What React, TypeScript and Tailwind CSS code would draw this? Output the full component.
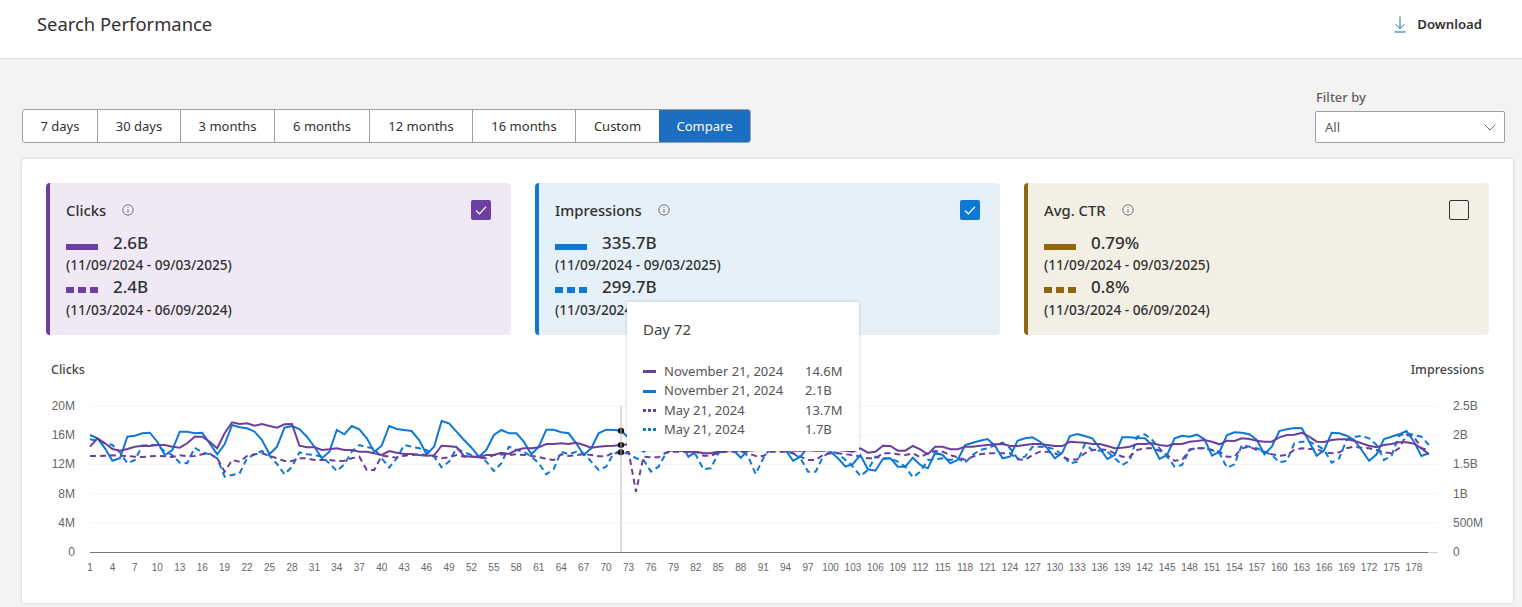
import React from "react";

const off = (a: number[]) => a.map((v) => v + 75);

const blueSolid = [
  120,130,160,197,190,125,122,115,113,140,
  180,165,110,110,115,113,145,178,148,90,
  97,100,110,135,178,155,98,93,102,125,
  155,190,170,105,118,93,103,130,170,152,
  93,102,105,108,135,178,155,78,85,110,
  135,158,185,165,120,105,115,115,140,178,
  155,104,104,112,115,145,180,160,115,104,
  105,107,128,
  ...off([
    75,95,80,50,45,50,70,
    110,95,60,45,45,60,90,113,90,50,
    40,45,50,90,122,110,80,50,60,95,
    115,140,132,105,148,152,117,115,140,140,
    113,135,145,98,105,130,120,75,68,62,
    57,78,115,110,62,55,52,65,85,115,
    98,48,42,48,55,85,117,105,52,52,
    54,55,75,117,105,55,47,50,44,58,
  ]),
  182,170,120,112,113,118,135,178,155,108,
  103,99,100,140,182,165,113,115,122,135,
  165,197,178,132,125,118,108,140,183,175,
];

const purpleSolid = [
  155,130,145,162,167,162,155,152,153,150,
  150,155,158,145,125,125,140,160,115,82,
  87,85,92,87,93,98,88,87,152,157,
  157,165,163,160,165,165,170,170,175,180,
  168,173,177,177,180,182,181,152,154,156,
  183,185,187,180,180,173,177,165,160,160,
  157,147,147,145,147,143,150,158,155,153,
  152,150,148,
  ...off([
    85,85,88,90,90,92,92,
    95,95,100,100,95,92,90,92,92,90,
    88,88,90,90,92,92,90,92,92,90,
    90,92,95,85,98,95,77,78,92,92,
    78,88,103,80,80,88,88,80,80,77,
    75,73,72,78,78,75,72,72,75,78,
    78,65,67,68,72,72,78,85,83,80,
    72,72,70,75,78,72,72,65,63,60,
  ]),
  140,148,137,138,130,132,137,140,140,127,
  120,119,113,125,140,141,135,133,133,137,
  145,152,157,150,147,142,142,146,160,178,
];

const blueDash = [
  133,137,145,150,172,205,195,152,150,150,
  170,180,203,205,158,172,178,190,245,240,
  235,190,178,168,182,207,238,215,172,178,
  180,185,205,228,208,170,150,157,160,190,
  218,190,150,155,160,165,185,217,200,160,
  172,180,185,200,228,205,155,165,170,185,
  205,238,222,170,178,170,175,200,225,215,
  175,175,175,
  ...off([
    115,120,155,140,100,85,85,
    90,105,148,145,100,85,85,85,110,162,
    115,85,85,90,100,115,155,155,110,95,
    100,120,140,168,150,110,115,115,125,140,
    172,155,120,118,115,120,115,128,105,90,
    85,75,68,85,115,110,80,80,82,88,
    105,130,125,72,90,92,95,115,135,122,
    50,43,60,85,110,140,135,88,85,85,
  ]),
  165,175,218,208,150,155,160,170,180,202,
  198,145,140,140,150,165,203,190,135,125,
  123,130,150,195,182,122,115,120,125,150,
];

const purpleDash = [
  183,183,182,181,182,183,185,186,184,183,
  184,186,181,184,183,178,176,190,230,195,
  200,183,178,175,182,190,198,198,190,190,
  195,195,195,198,197,190,185,225,225,182,
  185,188,182,180,178,180,183,190,187,180,
  185,184,188,190,180,178,180,178,180,183,
  186,192,195,178,183,180,178,180,184,184,
  172,172,170,
  ...off([
    215,110,112,112,98,95,95,
    95,95,107,107,98,95,95,95,100,108,
    108,95,95,95,100,110,120,120,105,100,
    100,103,105,110,115,115,100,100,103,105,
    100,112,100,93,95,105,112,120,110,103,
    100,100,100,100,118,120,105,95,95,100,
    110,120,118,100,90,88,90,100,110,110,
    90,85,85,92,105,122,120,90,85,85,
  ]),
  165,170,185,185,160,155,165,170,178,182,
  180,165,160,162,162,172,175,172,160,155,
  158,160,165,172,175,160,120,125,160,165,
];

const toPoints = (a: number[]) =>
  a.map((v, i) => `${(90 + i * 7.48).toFixed(1)},${(395 + v / 3).toFixed(1)}`).join(" ");

const xLabels: number[] = [];
for (let d = 1; d <= 178; d += 3) xLabels.push(d);

const left: [string, number][] = [
  ["20M", 406],
  ["16M", 435.2],
  ["12M", 464.4],
  ["8M", 493.6],
  ["4M", 522.8],
  ["0", 552],
];
const right: [string, number][] = [
  ["2.5B", 406],
  ["2B", 435.2],
  ["1.5B", 464.4],
  ["1B", 493.6],
  ["500M", 522.8],
  ["0", 552],
];

const tabs: [string, string][] = [
  ["7 days", "w-[74px]"],
  ["30 days", "w-[83px]"],
  ["3 months", "w-[94px]"],
  ["6 months", "w-[95px]"],
  ["12 months", "w-[103px]"],
  ["16 months", "w-[103px]"],
  ["Custom", "w-[84px]"],
];

function Info() {
  return (
    <svg width="12" height="12" viewBox="0 0 12 12" fill="none" stroke="#666" strokeWidth="0.9">
      <circle cx="6" cy="6" r="5.2" />
      <path d="M6 5.2V9" />
      <circle cx="6" cy="3.5" r="0.5" fill="#666" stroke="none" />
    </svg>
  );
}

function Legend({ dashed, bar }: { dashed?: boolean; bar: string }) {
  if (!dashed) return <div className={`w-8 h-[6px] mt-[10px] ${bar}`} />;
  return (
    <div className="w-8 h-[6px] mt-[10px] flex justify-between">
      <div className={`w-2 ${bar}`} />
      <div className={`w-2 ${bar}`} />
      <div className={`w-2 ${bar}`} />
    </div>
  );
}

function Metric({
  title,
  bg,
  border,
  bar,
  box,
  checked,
  v1,
  v2,
}: {
  title: string;
  bg: string;
  border: string;
  bar: string;
  box: string;
  checked: boolean;
  v1: string;
  v2: string;
}) {
  return (
    <div className={`h-[152px] rounded-[4px] border-l-4 ${bg} ${border} pl-4 pr-5 pt-[17px]`}>
      <div className="flex justify-between items-start h-5">
        <div className="flex items-center gap-[16px]">
          <span className="text-[14.8px] leading-5 font-medium text-[#323130]">{title}</span>
          <Info />
        </div>
        <div className={`w-5 h-5 rounded-[2px] flex items-center justify-center ${box}`}>
          {checked && (
            <svg width="14" height="14" viewBox="0 0 14 14" fill="none" stroke="#fff" strokeWidth="1.3">
              <path d="M2 7.5l3.4 3.4L12 3.8" />
            </svg>
          )}
        </div>
      </div>
      <div className="flex gap-[15px] h-6 mt-[14px]">
        <Legend bar={bar} />
        <span className="text-[17px] leading-5 -mt-[1px] font-medium text-[#323130]">{v1}</span>
      </div>
      <div className="text-[13.65px] leading-5 font-medium text-[#323130] -mt-[3px]">(11/09/2024 - 09/03/2025)</div>
      <div className="flex gap-[15px] h-6 mt-[2px]">
        <Legend dashed bar={bar} />
        <span className="text-[17px] leading-5 font-medium text-[#323130]">{v2}</span>
      </div>
      <div className="text-[13.65px] leading-5 font-medium text-[#323130] -mt-[1px]">(11/03/2024 - 06/09/2024)</div>
    </div>
  );
}

function TipRow({ dashed, color, date, value }: { dashed?: boolean; color: string; date: string; value: string }) {
  return (
    <div className="flex items-center h-[19.4px] text-[13px] text-[#555]">
      <svg width="13" height="3" className="mr-2 shrink-0">
        <line
          x1="0"
          y1="1.5"
          x2="13"
          y2="1.5"
          stroke={color}
          strokeWidth="3"
          strokeDasharray={dashed ? "3 2" : undefined}
        />
      </svg>
      <span className="w-[141px]">{date}</span>
      <span>{value}</span>
    </div>
  );
}

export default function App() {
  return (
    <div
      className="w-full h-[607px] overflow-hidden bg-[#f3f3f3]"
      style={{ fontFamily: '"Noto Sans", "Open Sans", sans-serif' }}
    >
      <header className="h-[59px] bg-white border-b border-[#e1e1e1] flex items-center justify-between pl-[37px] pr-[40px]">
        <h1 className="text-[18.4px] text-[#323130] -mt-[10px]">Search Performance</h1>
        <div className="flex items-center gap-[11px] -mt-[8px]">
          <svg width="12" height="17" viewBox="0 0 12 17" fill="none" stroke="#106ebe" strokeWidth="1" className="-mt-[1px]">
            <path d="M6 0.5V12.5M1.5 8.2L6 12.7L10.5 8.2M0.5 16H11.5" />
          </svg>
          <span className="text-[13.2px] font-semibold text-[#323130]">Download</span>
        </div>
      </header>

      <main className="pl-[22px] pr-[9px]">
        <div className="flex justify-between items-end pr-2 pt-[29px] h-[84px]">
          <div className="flex h-[34px] rounded-[3px] border border-[#a0a0a0] bg-white overflow-hidden">
            {tabs.map(([t, w], i) => (
              <div
                key={t}
                className={`${w} flex items-center justify-center pt-[2px] text-[13px] text-[#323130] ${
                  i === 0 ? "" : "border-l border-[#a0a0a0]"
                }`}
              >
                {t}
              </div>
            ))}
            <div className="w-[91px] bg-[#1b6ec2] flex items-center justify-center pt-[2px] text-[13px] text-white">
              Compare
            </div>
          </div>
          <div className="w-[190px]">
            <div className="text-[13px] leading-4 font-medium text-[#605e5c] mb-[6px] pl-[1px]">Filter by</div>
            <div className="h-8 bg-white border border-[#a0a0a0] rounded-[2px] flex items-center justify-between pl-[9px] pr-[8px]">
              <span className="text-[13px] text-[#605e5c] pt-[2px]">All</span>
              <svg width="12" height="7" viewBox="0 0 12 7" fill="none" stroke="#605e5c" strokeWidth="0.9">
                <path d="M0.7 0.7L6 6L11.3 0.7" />
              </svg>
            </div>
          </div>
        </div>

        <section className="relative mt-4 h-[444px] bg-white rounded-[3px] p-6 shadow-[0_0_3px_rgba(0,0,0,0.18)]">
          <div className="grid grid-cols-3 gap-6">
            <Metric
              title="Clicks"
              bg="bg-[#f0e9f5]"
              border="border-[#6b3fa0]"
              bar="bg-[#6b3fa0]"
              box="bg-[#6b3fa0]"
              checked
              v1="2.6B"
              v2="2.4B"
            />
            <Metric
              title="Impressions"
              bg="bg-[#e5f0f9]"
              border="border-[#0f78d4]"
              bar="bg-[#0f78d4]"
              box="bg-[#0f78d4]"
              checked
              v1="335.7B"
              v2="299.7B"
            />
            <Metric
              title="Avg. CTR"
              bg="bg-[#f3efe5]"
              border="border-[#8f6710]"
              bar="bg-[#8f6710]"
              box="border border-[#323130]"
              checked={false}
              v1="0.79%"
              v2="0.8%"
            />
          </div>

          <div className="flex justify-between px-[5px] mt-[27px] h-[15px] text-[12.5px] leading-4 font-medium text-[#444]">
            <span>Clicks</span>
            <span>Impressions</span>
          </div>

          <svg width="1443" height="185" viewBox="46 395 1443 185" className="block mt-[18px]">
            {left.slice(0, 5).map(([, y]) => (
              <line key={y} x1="90" x2="1438" y1={y} y2={y} stroke="#f4f4f4" strokeWidth="1" />
            ))}
            <line x1="90" x2="1428" y1="552.5" y2="552.5" stroke="#777" strokeWidth="1" />
            <line x1="1428" x2="1438" y1="552.5" y2="552.5" stroke="#ccc" strokeWidth="1" />
            <line x1="621" x2="621" y1="406" y2="552" stroke="#dcdcdc" strokeWidth="2" />

            <polyline points={toPoints(blueDash)} fill="none" stroke="#0f78d4" strokeWidth="2" strokeDasharray="6 4" />
            <polyline points={toPoints(purpleDash)} fill="none" stroke="#6b3fa0" strokeWidth="2" strokeDasharray="6 4" />
            <polyline points={toPoints(blueSolid)} fill="none" stroke="#0f78d4" strokeWidth="2" />
            <polyline points={toPoints(purpleSolid)} fill="none" stroke="#6b3fa0" strokeWidth="2" />

            {[430.7, 445, 452.3].map((y) => (
              <g key={y}>
                <ellipse cx="621" cy={y} rx="3.2" ry="3" fill="#111" />
                <line x1="621" x2="621" y1={y - 3} y2={y + 3} stroke="#ddd" strokeWidth="0.8" />
              </g>
            ))}

            <g fontFamily='"Liberation Sans", Arial, sans-serif' fill="#666">
              {left.map(([t, y]) => (
                <text key={t} x="75" y={y + 4} fontSize="12" textAnchor="end">
                  {t}
                </text>
              ))}
              {right.map(([t, y]) => (
                <text key={t} x="1453" y={y + 4} fontSize="12">
                  {t}
                </text>
              ))}
              {xLabels.map((d) => (
                <text key={d} x={90 + (d - 1) * 7.48} y="571" fontSize="10" textAnchor="middle">
                  {d}
                </text>
              ))}
            </g>
          </svg>

          <div className="absolute left-[605px] top-[143px] w-[232px] h-[149px] bg-white shadow-[0_0_3px_rgba(0,0,0,0.2)] px-4 pt-[16px]">
            <div className="text-[15px] leading-[22px] text-[#444] mb-[22px]">Day 72</div>
            <TipRow color="#6b3fa0" date="November 21, 2024" value="14.6M" />
            <TipRow color="#0f78d4" date="November 21, 2024" value="2.1B" />
            <TipRow dashed color="#6b3fa0" date="May 21, 2024" value="13.7M" />
            <TipRow dashed color="#0f78d4" date="May 21, 2024" value="1.7B" />
          </div>
        </section>
      </main>
    </div>
  );
}
